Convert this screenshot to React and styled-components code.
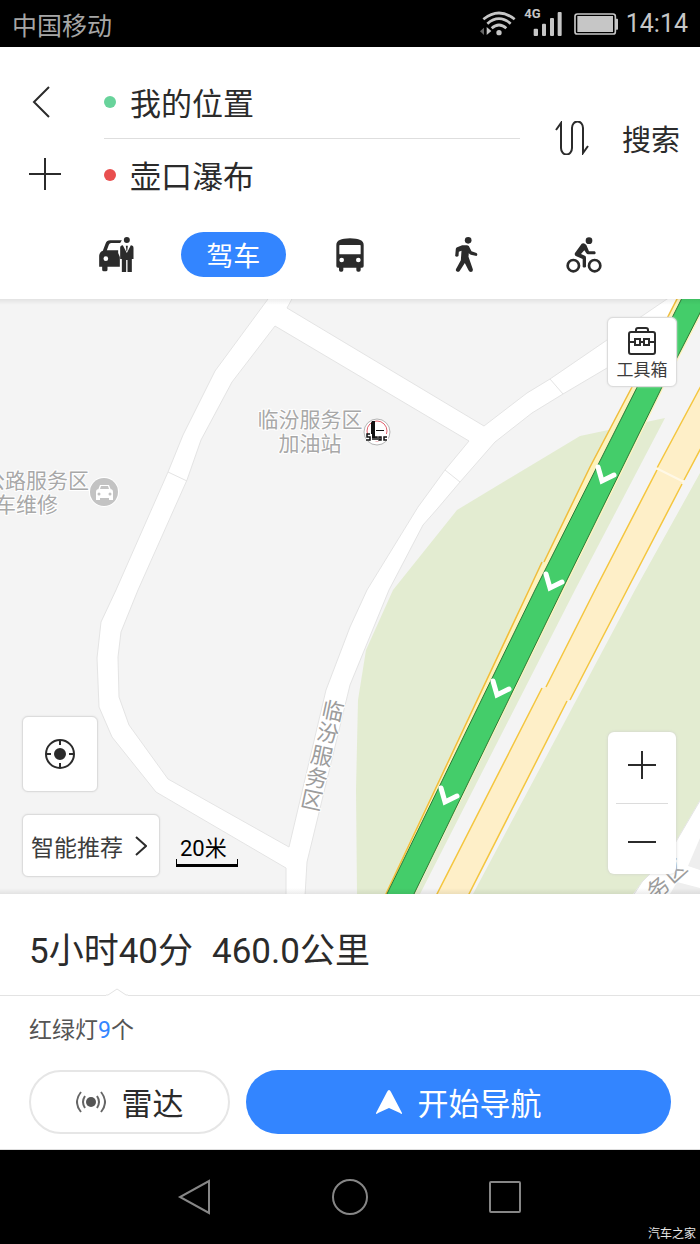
import styled, { createGlobalStyle } from "styled-components";

const App = () => {
  return (
    <Page>
      <GlobalStyle />
      <StatusBar />
      <RouteHeader />
      <MapView />
      <RoutePanel />
      <SystemNav />
    </Page>
  );
};

const StatusBar = () => {
  return (
    <StatusStyle>
      <span>中国移动</span>
      <StatusIcons>
        <svg width="36" height="25" viewBox="396 34 108 75" fill="#c6c6c6">
          <g fill="none" stroke="#c6c6c6" strokeWidth="8">
            <path d="M406 59Q453 21 500 59" />
            <path d="M418 72Q453 42 488 72" />
            <path d="M431 86Q453 66 475 86" />
          </g>
          <circle cx="453" cy="99" r="8" />
          <path d="M408 84V106L396 95Z" fill="#666" />
          <path d="M416 82V106L430 94Z" />
        </svg>
        <svg width="42" height="45" viewBox="521 3 126 135" fill="#c6c6c6">
          <SignalText x="522" y="53">
            4G
          </SignalText>
          <rect x="550" y="86" width="13" height="22" rx="3" />
          <rect x="575" y="71" width="12" height="37" rx="3" />
          <rect x="599" y="54" width="12" height="54" rx="3" />
          <rect x="622" y="36" width="12" height="72" rx="3" />
        </svg>
        <svg width="44" height="22" viewBox="668 40 132 66" fill="#c6c6c6">
          <rect
            x="671"
            y="43"
            width="121"
            height="60"
            rx="7"
            fill="none"
            stroke="#c6c6c6"
            strokeWidth="5"
          />
          <rect x="678" y="49" width="107" height="48" />
          <rect x="793" y="57" width="7" height="33" rx="2" />
        </svg>
        <Clock>14:14</Clock>
      </StatusIcons>
    </StatusStyle>
  );
};

const RouteHeader = () => {
  return (
    <HeaderStyle>
      <RouteForm>
        <SideButtons>
          <PlainButton aria-label="返回">
            <svg width="32" height="32" viewBox="0 0 32 32">
              <path d="M20 1L5 16L20 31" />
            </svg>
          </PlainButton>
          <PlainButton aria-label="添加途经点">
            <svg width="32" height="32" viewBox="0 0 32 32">
              <path d="M16 0V32M0 16H32" />
            </svg>
          </PlainButton>
        </SideButtons>
        <Fields>
          <Field $dot="#68d39b">
            <input aria-label="起点" defaultValue="我的位置" />
          </Field>
          <Field $dot="#e94f4f">
            <input aria-label="终点" defaultValue="壶口瀑布" />
          </Field>
        </Fields>
        <PlainButton aria-label="交换起终点">
          <svg width="34" height="34" viewBox="0 0 34 34">
            <path d="M1 9L6 2V27A5 6 0 0 0 17 27V7A5 6 0 0 1 28 7V32L33 25" />
          </svg>
        </PlainButton>
        <SearchButton>搜索</SearchButton>
      </RouteForm>
      <Modes>
        <ModeButton aria-label="打车">
          <svg width="35" height="35" viewBox="57 51 104 105">
            <path d="M57 109Q57 96 68 92L76 71Q80 61 90 61H125L120 69H93Q88 69 86 74L80 91H114V99L119 111V140H82V149Q82 154 77 154H71Q66 154 66 149V140H57Z" />
            <circle cx="77" cy="116" r="7" fill="#fff" />
            <circle cx="140" cy="60" r="9" />
            <path d="M128 76L140 99L152 76Q160 76 160 84V117H155V156H142V120H138V156H125V117H120V84Q120 76 128 76Z" />
            <path d="M137 77H143L141 94H139Z" />
          </svg>
        </ModeButton>
        <ModeButton $active>驾车</ModeButton>
        <ModeButton aria-label="公交">
          <svg width="28" height="34" viewBox="48 53 84 102">
            <path d="M49 74Q49 54 90 54Q131 54 131 74V137Q131 142 126 142H122V149Q122 154 117 154H114Q109 154 109 149V142H70V149Q70 154 65 154H62Q57 154 57 149V142H54Q49 142 49 137Z" />
            <rect x="58" y="74" width="64" height="28" rx="2" fill="#fff" />
            <circle cx="65" cy="119" r="7" fill="#fff" />
            <circle cx="115" cy="119" r="7" fill="#fff" />
          </svg>
        </ModeButton>
        <ModeButton aria-label="步行">
          <svg width="23" height="35" viewBox="408 51 68 105">
            <circle cx="447" cy="61" r="10" />
            <path d="M429 76H444Q450 77 452 84L457 94L472 99Q477 103 472 108L455 104Q450 103 449 99L448 110L461 148Q462 156 455 156Q450 156 448 151L437 129L422 152Q418 158 412 154Q408 150 412 145L425 121L427 92L419 95L418 108Q413 113 408 108L410 86Q411 83 414 82Z" />
          </svg>
        </ModeButton>
        <ModeButton aria-label="骑行">
          <svg width="36" height="36" viewBox="736 50 108 108">
            <circle cx="805" cy="61" r="10" />
            <g fill="none" stroke="#2b2b2b" strokeWidth="8">
              <circle cx="758" cy="136" r="17" />
              <circle cx="822" cy="136" r="17" />
            </g>
            <path d="M783 70Q791 67 797 74L805 93H822Q828 98 822 102H802Q799 102 797 99L791 90L781 101L794 107Q796 109 796 113V139Q791 144 786 139V116L767 108Q760 104 763 98Z" />
          </svg>
        </ModeButton>
      </Modes>
    </HeaderStyle>
  );
};

// Chevrons that mark the travel direction on the green route
const chevrons = [
  [598, 467],
  [546, 574],
  [493, 681],
  [441, 788],
];

const roadLabel = [
  ["临", 333, 711],
  ["汾", 328, 733],
  ["服", 322, 756],
  ["务", 317, 778],
  ["区", 312, 800],
];

const MapView = () => {
  return (
    <MapStyle>
      <MapCanvas viewBox="0 299 700 595" preserveAspectRatio="xMidYMid slice">
        <g fill="#e3ecd1">
          <path d="M357 894L356 790L358 700L366 650L393 590L457 510L580 436L665 418L575 590L420 894Z" />
          <path d="M700 473L635 590L473 894H633L642 882L667 857L700 800Z" />
        </g>
        <g fill="#fff" stroke="#e4e4e4">
          <path d="M268 299L215 371L183 435L168 472L116 590L101 622L97 658L99 707L112 737L156 792L286 868V896H305L307 862L350 685L389 590L423 525L438 508L460 482L495 442L532 413L563 394L607 368L700 315V281L667 299L607 340L550 379L527 393L484 426L287 308L293 297H270ZM275 326L469 441L445 470L418 507L367 590L350 627L326 690L289 847L168 779L129 725L119 697L118 657L121 632L138 590L187 480L201 440L232 382Z" />
          <path d="M168 472L187 481M445 470L460 482M550 379L563 394" />
          <path d="M633 896L642 882L667 857L704 794V900H633Z" />
        </g>
        <path
          d="M688 866L700 838V870ZM670 894L677 882L700 888V894Z"
          fill="#eee"
        />
        <path
          d="M677 299L632 388L590 467L544 562L528 590L385 894H415L564 590L664 387L702 313V299Z"
          fill="#fdf3bd"
        />
        <path
          d="M678 297L632 387L590 467L544 562M542 562L529 590L385 896"
          fill="none"
          stroke="#f0bd3c"
          strokeWidth="1.5"
        />
        <path
          d="M682 298L535 590L386 896H413L562 590L662 387L702 309V298Z"
          fill="#44cd6a"
          stroke="#2c7a37"
        />
        <path
          d="M702 384L657 468L595 590L546 687L542 688L436 896H468L567 701L570 700L627 590L683 482L702 446Z"
          fill="#feefc8"
        />
        <path
          d="M702 384L657 468M657 470L595 590L546 687M542 688L436 896M702 446L684 480M682 484L627 590L570 700M567 701L468 896"
          fill="none"
          stroke="#f4c63f"
          strokeWidth="1.5"
        />
        <path d="M656 468L684 482" stroke="#fff8e6" strokeWidth="2" />
        {chevrons.map(([x, y]) => (
          <path
            key={y}
            d={`M${x} ${y}L${x + 4} ${y + 14}L${x + 16} ${y + 8}`}
            fill="none"
            stroke="#fff"
            strokeWidth="5"
            strokeLinecap="round"
          />
        ))}
        <MapText x="310" y="427" textAnchor="middle">
          临汾服务区
        </MapText>
        <MapText x="310" y="451" textAnchor="middle">
          加油站
        </MapText>
        <MapText x="89" y="488" textAnchor="end">
          公路服务区
        </MapText>
        <MapText x="58" y="512" textAnchor="end">
          车维修
        </MapText>
        {roadLabel.map(([char, x, y]) => (
          <RoadText
            key={y}
            textAnchor="middle"
            transform={`translate(${x} ${y}) rotate(12)`}
            y="8"
          >
            {char}
          </RoadText>
        ))}
        <RoadText
          textAnchor="middle"
          transform="translate(658 888) rotate(-42)"
          y="8"
        >
          务
        </RoadText>
        <RoadText
          textAnchor="middle"
          transform="translate(675 871) rotate(-42)"
          y="8"
        >
          区
        </RoadText>
        {/* fuel station */}
        <circle cx="377" cy="432" r="13" fill="#fff" stroke="#b5b5b5" />
        <circle cx="377" cy="431" r="10" fill="none" stroke="#e0606c" />
        <path d="M372 421H375V437H371V423ZM376 430H384V431H376Z" fill="#111" />
        <path d="M366 434H388V441H366Z" fill="#fff" />
        <path d="M372 430H375V438H372Z" fill="#111" />
        <path
          d="M370 434H367V437H370V440H366M373 440V437M375 440V437H377V440M379 437H381V440H379ZM387 437H384V440H387"
          fill="none"
          stroke="#111"
          strokeWidth="1.5"
        />
        {/* car repair */}
        <circle cx="104" cy="492" r="15" fill="#fff" />
        <circle cx="104" cy="492" r="14" fill="#c3c3c3" />
        <path
          d="M98 490L100 485H109L111 490M96 492Q96 489 99 489H110Q113 489 113 492V500H109V498H100V500H96Z"
          fill="#fff"
        />
        <path d="M100 489L101 486H108L109 489Z" fill="#c3c3c3" />
        <circle cx="99" cy="494" r="1.5" fill="#c3c3c3" />
        <circle cx="110" cy="494" r="1.5" fill="#c3c3c3" />
      </MapCanvas>
      <MapControls>
        <ToolboxButton>
          <svg width="28" height="28" viewBox="0 0 28 28">
            <path d="M8 5V3A2 2 0 0 1 10 1H18A2 2 0 0 1 20 3V5M3 5H25A2 2 0 0 1 27 7V25A2 2 0 0 1 25 27H3A2 2 0 0 1 1 25V7A2 2 0 0 1 3 5ZM1 15H7M12 15H16M21 15H27M7 12H12V18H7ZM16 12H21V18H16Z" />
          </svg>
          工具箱
        </ToolboxButton>
        <ControlsRow>
          <LeftControls>
            <LocateButton aria-label="定位">
              <svg width="30" height="30" viewBox="0 0 30 30">
                <circle cx="15" cy="15" r="14" />
                <circle cx="15" cy="15" r="5" fill="#2b2b2b" />
                <path d="M15 1V6M15 24V29M1 15H6M24 15H29" />
              </svg>
            </LocateButton>
            <SmartButton>
              智能推荐
              <svg width="12" height="20" viewBox="0 0 12 20">
                <path d="M1 1L11 10L1 19" />
              </svg>
            </SmartButton>
          </LeftControls>
          <Scale>20米</Scale>
          <ZoomControls>
            <button aria-label="放大">
              <svg width="28" height="28" viewBox="0 0 28 28">
                <path d="M14 0V28M0 14H28" />
              </svg>
            </button>
            <button aria-label="缩小">
              <svg width="28" height="28" viewBox="0 0 28 28">
                <path d="M0 14H28" />
              </svg>
            </button>
          </ZoomControls>
        </ControlsRow>
      </MapControls>
    </MapStyle>
  );
};

const RoutePanel = () => {
  return (
    <PanelStyle>
      <Summary>
        <span>5小时40分</span>
        <span>460.0公里</span>
        <Notch width="22" height="8" viewBox="0 0 22 8">
          <path d="M0 7H2L11 1L20 7H22V8H0Z" fill="#fff" />
          <path d="M0 7H2L11 1L20 7H22" fill="none" stroke="#e3e3e3" />
        </Notch>
      </Summary>
      <Details>
        红绿灯<b>9</b>个
      </Details>
      <Actions>
        <ActionButton>
          <svg width="30" height="22" viewBox="0 0 30 22">
            <circle cx="15" cy="11" r="5" fill="#555" />
            <g fill="none" stroke="#666" strokeWidth="2">
              <path d="M9 5Q5 11 9 17M21 5Q25 11 21 17M5 1Q-3 11 5 21M25 1Q33 11 25 21" />
            </g>
          </svg>
          雷达
        </ActionButton>
        <ActionButton $primary>
          <svg width="26" height="24" viewBox="0 0 26 24">
            <path
              d="M13 0Q14 0 15 2L26 23Q26 25 24 23L13 18L2 23Q0 25 0 23L11 2Q12 0 13 0Z"
              fill="#fff"
            />
          </svg>
          开始导航
        </ActionButton>
      </Actions>
    </PanelStyle>
  );
};

const SystemNav = () => {
  return (
    <NavStyle>
      <button aria-label="后退">
        <svg width="36" height="36" viewBox="0 0 36 36">
          <path d="M32 2V34L3 18Z" />
        </svg>
      </button>
      <button aria-label="主屏幕">
        <svg width="36" height="36" viewBox="0 0 36 36">
          <circle cx="18" cy="18" r="17" />
        </svg>
      </button>
      <button aria-label="最近任务">
        <svg width="36" height="36" viewBox="0 0 36 36">
          <rect x="3" y="3" width="30" height="30" rx="1" />
        </svg>
      </button>
      <Watermark>汽车之家</Watermark>
    </NavStyle>
  );
};

const GlobalStyle = createGlobalStyle`
  * {
    box-sizing: border-box;
  }

  body {
    --digits: Roboto, "Noto Sans CJK SC", sans-serif;
    margin: 0;
    background-color: white;
    color: #2b2b2b;
    font-family: "Noto Sans CJK SC", sans-serif;
  }

  button {
    display: flex;
    align-items: center;
    justify-content: center;
    padding: 0;
    border: none;
    background: none;
    color: inherit;
    font-family: inherit;
    cursor: pointer;
  }

  svg {
    display: block;
    flex: none;
  }
`;

const Page = styled.div`
  display: flex;
  flex-direction: column;
  min-height: 100vh;
`;

const StatusStyle = styled.div`
  display: flex;
  align-items: center;
  justify-content: space-between;
  height: 47px;
  padding: 0 12px;
  background-color: black;
  color: #a6a6a6;
  font-size: 25px;
  line-height: 36px;
`;
const StatusIcons = styled.div`
  display: flex;
  align-items: center;
  gap: 8px;
`;
const SignalText = styled.text`
  font-family: var(--digits);
  font-size: 39px;
  font-weight: 700;
`;
const Clock = styled.span`
  color: #c6c6c6;
  font-family: var(--digits);
`;

const HeaderStyle = styled.header`
  padding-top: 19px;
  background-color: white;
`;
const RouteForm = styled.div`
  display: flex;
  align-items: center;
  padding: 0 20px 0 29px;
`;
const PlainButton = styled.button`
  height: 72px;

  path {
    fill: none;
    stroke: #2b2b2b;
    stroke-width: 2;
  }
`;
const SideButtons = styled.div`
  display: flex;
  flex-direction: column;
  width: 75px;

  ${PlainButton} {
    width: 32px;
  }
`;
const Fields = styled.div`
  flex: 1;
  min-width: 0;
  margin-right: 35px;
`;
const Field = styled.div`
  display: flex;
  align-items: center;
  gap: 14px;
  height: 72px;

  &::before {
    content: "";
    flex: none;
    width: 12px;
    height: 12px;
    border-radius: 50%;
    background-color: ${({ $dot }) => $dot};
  }

  &:last-child {
    border-top: 1px solid #dedede;
  }

  input {
    flex: 1;
    min-width: 0;
    padding: 0;
    border: none;
    outline: none;
    color: inherit;
    font-family: inherit;
    font-size: 31px;
    line-height: 46px;
  }
`;
const SearchButton = styled.button`
  margin-left: 33px;
  font-size: 29px;
  line-height: 44px;
`;
const Modes = styled.nav`
  display: grid;
  grid-template-columns: repeat(5, 1fr);
  justify-items: center;
  align-items: center;
  height: 89px;
  padding: 0 58px;
`;
const ModeButton = styled.button`
  width: 105px;
  height: 45px;
  border-radius: 23px;
  background-color: ${({ $active }) => ($active ? "#3385ff" : "transparent")};
  color: ${({ $active }) => ($active ? "white" : "#2b2b2b")};
  font-size: 27px;
  line-height: 40px;

  svg {
    fill: #2b2b2b;
  }
`;

const MapStyle = styled.main`
  position: relative;
  display: flex;
  flex: 1;
  min-height: 420px;
  overflow: hidden;
  background-color: #f4f4f4;
`;
const MapCanvas = styled.svg`
  position: absolute;
  inset: 0;
  width: 100%;
  height: 100%;
`;
const MapText = styled.text`
  fill: #a8a8a8;
  stroke: white;
  stroke-width: 2px;
  paint-order: stroke;
  font-family: var(--digits);
  font-size: 21px;
`;
const RoadText = styled(MapText)`
  fill: #9c9c9c;
  font-size: 22px;
`;
const MapControls = styled.div`
  position: relative;
  display: flex;
  flex: 1;
  flex-direction: column;
  justify-content: space-between;
  padding: 18px 23px 17px 22px;
  background-image: linear-gradient(
      to bottom,
      rgba(0, 0, 0, 0.07),
      transparent 6px
    ),
    linear-gradient(to top, rgba(0, 0, 0, 0.07), transparent 6px);

  button path,
  button circle {
    stroke: #2b2b2b;
    stroke-width: 2;
  }

  button svg {
    fill: none;
  }
`;
const FloatingButton = styled.button`
  border: 1px solid #dcdcdc;
  border-radius: 6px;
  background-color: white;
  color: #3c3c3c;
  box-shadow: 0 0 2px #ddd;
`;
const ToolboxButton = styled(FloatingButton)`
  flex-direction: column;
  align-self: flex-end;
  gap: 2px;
  width: 70px;
  height: 70px;
  padding-top: 4px;
  font-size: 17px;
  line-height: 24px;
`;
const ControlsRow = styled.div`
  display: flex;
  align-items: flex-end;
`;
const LeftControls = styled.div`
  display: flex;
  flex-direction: column;
  gap: 22px;
`;
const LocateButton = styled(FloatingButton)`
  width: 76px;
  height: 76px;
`;
const SmartButton = styled(FloatingButton)`
  justify-content: flex-start;
  gap: 12px;
  width: 138px;
  height: 63px;
  padding-left: 8px;
  font-size: 23px;
  line-height: 34px;
`;
const Scale = styled.div`
  position: relative;
  width: 62px;
  margin: 0 0 10px 16px;
  padding: 0 4px 2px;
  color: black;
  font-family: var(--digits);
  font-size: 22px;
  line-height: 32px;

  &::after {
    content: "";
    position: absolute;
    right: 0;
    bottom: 0;
    left: 0;
    height: 5px;
    border: solid black;
    border-width: 0 1px 3px;
  }
`;
const ZoomControls = styled.div`
  width: 68px;
  margin: 0 1px 3px auto;
  padding: 0 8px;
  border-radius: 6px;
  background-color: white;
  box-shadow: 0 0 3px #ccc;

  button {
    width: 100%;
    height: 71px;
    padding-bottom: 6px;
  }

  button + button {
    padding: 6px 0 0;
    border-top: 1px solid #dcdcdc;
  }
`;

const PanelStyle = styled.section`
  padding-bottom: 15px;
  border-bottom: 1px solid #ddd;
  background-color: white;
`;
const Summary = styled.div`
  position: relative;
  display: flex;
  align-items: center;
  gap: 19px;
  height: 102px;
  padding: 14px 29px 0;
  border-bottom: 1px solid #e3e3e3;
  font-family: var(--digits);
  font-size: 35px;
  line-height: 52px;
`;
const Notch = styled.svg`
  position: absolute;
  bottom: -1px;
  left: 106px;
`;
const Details = styled.p`
  margin: 0;
  padding: 15px 29px 22px;
  color: #555;
  font-size: 23px;
  line-height: 34px;

  b {
    color: #3385ff;
    font-family: var(--digits);
    font-weight: 400;
  }
`;
const Actions = styled.div`
  display: grid;
  grid-template-columns: 9fr 19fr;
  gap: 16px;
  padding: 0 29px;
`;
const ActionButton = styled.button`
  gap: 16px;
  height: 64px;
  border: ${({ $primary }) => ($primary ? "none" : "2px solid #e6e6e6")};
  border-radius: 32px;
  background-color: ${({ $primary }) => ($primary ? "#3385ff" : "white")};
  color: ${({ $primary }) => ($primary ? "white" : "#2b2b2b")};
  font-size: 31px;
  line-height: 46px;
`;

const NavStyle = styled.footer`
  position: relative;
  display: flex;
  justify-content: center;
  height: 94px;
  background-color: black;

  button {
    width: 155px;
  }

  svg {
    fill: none;
    stroke: #868686;
    stroke-width: 2;
  }
`;
const Watermark = styled.span`
  position: absolute;
  right: 4px;
  bottom: 2px;
  color: #e6e6e6;
  font-size: 12px;
  line-height: 18px;
`;

export default App;
